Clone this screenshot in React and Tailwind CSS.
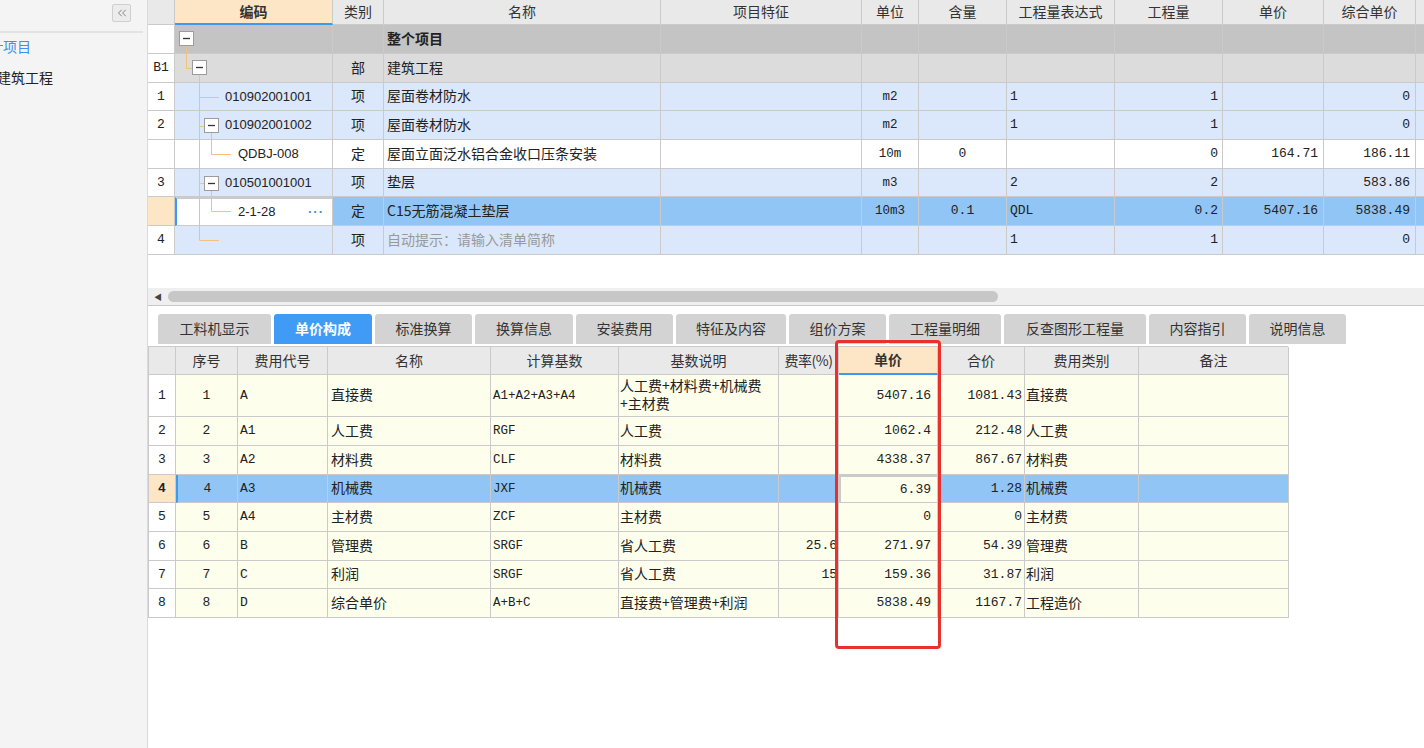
import { ChevronsLeft } from 'lucide-react';

const cjk = "font-['Noto_Sans_CJK_SC',sans-serif]";
const mono = "font-['Liberation_Mono','Noto_Sans_CJK_SC',monospace]";
const sans = "font-['Liberation_Sans','Noto_Sans_CJK_SC',sans-serif]";
// CJK glyphs sit a little low in the line box, lift them
const cn = 'pb-[3px]';

const topCols = ['w-[27px]', 'w-[158px]', 'w-[51px]', 'w-[277px]', 'w-[201px]', 'w-[57px]', 'w-[88px]', 'w-[108px]', 'w-[108px]', 'w-[101px]', 'w-[92px]', 'w-[80px]'];
const topHead = ['', '编码', '类别', '名称', '项目特征', '单位', '含量', '工程量表达式', '工程量', '单价', '综合单价', ''];

const topRows = [
  { h: 'h-[29px]', bg: 'bg-[#c4c4c4]', num: '', code: '', type: '', name: '整个项目', bold: true },
  { h: 'h-[29px]', bg: 'bg-[#dcdcdc]', num: 'B1', code: '', type: '部', name: '建筑工程' },
  { h: 'h-[28px]', bg: 'bg-[#dbe8fb]', num: '1', code: '010902001001', pl: 'pl-[50px]', type: '项', name: '屋面卷材防水', unit: 'm2', expr: '1', qty: '1', total: '0' },
  { h: 'h-[29px]', bg: 'bg-[#dbe8fb]', num: '2', code: '010902001002', pl: 'pl-[50px]', type: '项', name: '屋面卷材防水', unit: 'm2', expr: '1', qty: '1', total: '0' },
  { h: 'h-[29px]', bg: 'bg-white', num: '', code: 'QDBJ-008', pl: 'pl-[63px]', type: '定', name: '屋面立面泛水铝合金收口压条安装', unit: '10m', amt: '0', qty: '0', price: '164.71', total: '186.11' },
  { h: 'h-[28px]', bg: 'bg-[#dbe8fb]', num: '3', code: '010501001001', pl: 'pl-[50px]', type: '项', name: '垫层', unit: 'm3', expr: '2', qty: '2', total: '583.86' },
  { h: 'h-[29px]', bg: 'bg-[#90c5f5]', num: '', code: '2-1-28', pl: 'pl-[61px]', type: '定', name: 'C15无筋混凝土垫层', unit: '10m3', amt: '0.1', expr: 'QDL', qty: '0.2', price: '5407.16', total: '5838.49', editing: true },
  { h: 'h-[29px]', bg: 'bg-[#dbe8fb]', num: '4', code: '', type: '项', name: '自动提示：请输入清单简称', hint: true, expr: '1', qty: '1', total: '0' },
];

const botCols = ['w-[27px]', 'w-[62px]', 'w-[90px]', 'w-[163px]', 'w-[128px]', 'w-[160px]', 'w-[60px]', 'w-[99px]', 'w-[87px]', 'w-[114px]', 'w-[150px]'];
const botHead = ['', '序号', '费用代号', '名称', '计算基数', '基数说明', '费率(%)', '单价', '合价', '费用类别', '备注'];

const botRows = [
  { h: 'h-[42px]', n: '1', code: 'A', name: '直接费', base: 'A1+A2+A3+A4', desc: ['人工费+材料费+机械费', '+主材费'], rate: '', price: '5407.16', sum: '1081.43', cat: '直接费' },
  { h: 'h-[29px]', n: '2', code: 'A1', name: '人工费', base: 'RGF', desc: ['人工费'], rate: '', price: '1062.4', sum: '212.48', cat: '人工费' },
  { h: 'h-[29px]', n: '3', code: 'A2', name: '材料费', base: 'CLF', desc: ['材料费'], rate: '', price: '4338.37', sum: '867.67', cat: '材料费' },
  { h: 'h-[28px]', n: '4', code: 'A3', name: '机械费', base: 'JXF', desc: ['机械费'], rate: '', price: '6.39', sum: '1.28', cat: '机械费', sel: true },
  { h: 'h-[29px]', n: '5', code: 'A4', name: '主材费', base: 'ZCF', desc: ['主材费'], rate: '', price: '0', sum: '0', cat: '主材费' },
  { h: 'h-[29px]', n: '6', code: 'B', name: '管理费', base: 'SRGF', desc: ['省人工费'], rate: '25.6', price: '271.97', sum: '54.39', cat: '管理费' },
  { h: 'h-[28px]', n: '7', code: 'C', name: '利润', base: 'SRGF', desc: ['省人工费'], rate: '15', price: '159.36', sum: '31.87', cat: '利润' },
  { h: 'h-[29px]', n: '8', code: 'D', name: '综合单价', base: 'A+B+C', desc: ['直接费+管理费+利润'], rate: '', price: '5838.49', sum: '1167.7', cat: '工程造价' },
];

const tabs = [
  ['工料机显示', 'w-[113px]'], ['单价构成', 'w-[98px]'], ['标准换算', 'w-[97px]'], ['换算信息', 'w-[98px]'],
  ['安装费用', 'w-[97px]'], ['特征及内容', 'w-[110px]'], ['组价方案', 'w-[97px]'], ['工程量明细', 'w-[112px]'],
  ['反查图形工程量', 'w-[142px]'], ['内容指引', 'w-[97px]'], ['说明信息', 'w-[97px]'],
];

const cell = 'shrink-0 h-full border-r border-b border-[#cacaca] flex items-center overflow-hidden whitespace-nowrap';

function MinusBox({ x, y }) {
  return (
    <g>
      <rect x={x + 0.5} y={y + 0.5} width="14" height="14" fill="#fff" stroke="#9c9c9c" />
      <line x1={x + 4} y1={y + 7.5} x2={x + 11} y2={y + 7.5} stroke="#333" strokeWidth="1.3" />
    </g>
  );
}

function Tree() {
  const c = '#f4c080';
  return (
    <svg className="absolute left-0 top-0 pointer-events-none" width="200" height="260">
      <path d="M38.5 46 V68.5 H44" stroke={c} fill="none" />
      <path d="M51.5 75 V240.5 H71" stroke={c} fill="none" />
      <path d="M51.5 97.5 H71" stroke={c} fill="none" />
      <path d="M51.5 126.5 H56" stroke={c} fill="none" />
      <path d="M63.5 133 V154.5 H83" stroke={c} fill="none" />
      <path d="M51.5 183.5 H56" stroke={c} fill="none" />
      <path d="M63.5 191 V211.5 H83" stroke={c} fill="none" />
      <MinusBox x={31} y={31} />
      <MinusBox x={44} y={60} />
      <MinusBox x={56} y={118} />
      <MinusBox x={56} y={176} />
    </svg>
  );
}

function TopTable() {
  return (
    <div className="relative h-[288px] overflow-hidden">
      <div className="flex h-[25px] bg-[#e9e9e9]">
        {topHead.map((t, i) => (
          <div key={i} className={`${cell} ${topCols[i]} justify-center text-[14px] text-[#333] pb-[2px] ${i === 1 ? 'bg-[#fde6c6] font-bold border-b-2 border-b-[#3c9af0]' : ''}`}>{t}</div>
        ))}
      </div>
      {topRows.map((r, idx) => (
        <div key={idx} className={`flex ${r.h} ${r.bg} text-[14px] text-[#222]`}>
          <div className={`${cell} ${topCols[0]} justify-center ${r.editing ? 'bg-[#fde6c6]' : 'bg-white'} ${mono} text-[13px]`}>{r.num}</div>
          <div className={`${cell} ${topCols[1]} ${r.pl || ''} ${sans} text-[13px] ${r.editing ? 'bg-white border-2 border-[#6e6e6e] border-l-[#3c9af0] justify-between pr-[8px]' : ''}`}>
            <span>{r.code}</span>
            {r.editing && <span className="text-[#3a8fe6] font-bold tracking-[1px] text-[13px]">···</span>}
          </div>
          <div className={`${cell} ${topCols[2]} justify-center ${cn}`}>{r.type}</div>
          <div className={`${cell} ${topCols[3]} pl-[3px] ${cn} ${r.bold ? 'font-bold' : ''} ${r.hint ? 'text-[#999]' : ''}`}>{r.name}</div>
          <div className={`${cell} ${topCols[4]}`}></div>
          <div className={`${cell} ${topCols[5]} justify-center ${mono} text-[12.5px]`}>{r.unit}</div>
          <div className={`${cell} ${topCols[6]} justify-center ${mono} text-[13px]`}>{r.amt}</div>
          <div className={`${cell} ${topCols[7]} pl-[3px] ${mono} text-[13px]`}>{r.expr}</div>
          <div className={`${cell} ${topCols[8]} justify-end pr-[4px] ${mono} text-[13px]`}>{r.qty}</div>
          <div className={`${cell} ${topCols[9]} justify-end pr-[5px] ${mono} text-[13px]`}>{r.price}</div>
          <div className={`${cell} ${topCols[10]} justify-end pr-[5px] ${mono} text-[13px]`}>{r.total}</div>
          <div className={`${cell} ${topCols[11]}`}></div>
        </div>
      ))}
      <Tree />
    </div>
  );
}

function BottomTable() {
  return (
    <div className="border-t border-l border-[#cacaca] w-[1140px]">
      <div className="flex h-[28px] bg-[#e9e9e9]">
        {botHead.map((t, i) => (
          <div key={i} className={`${cell} ${botCols[i]} justify-center text-[14px] text-[#333] pb-[2px] ${i === 7 ? 'bg-[#fde6c6] font-bold border-b-2 border-b-[#3c9af0]' : ''} ${i === 6 ? 'text-[13px] tracking-[-0.5px]' : ''}`}>{t}</div>
        ))}
      </div>
      {botRows.map((r) => (
        <div key={r.n} className={`flex ${r.h} ${r.sel ? 'bg-[#90c5f5]' : 'bg-[#fefeec]'} text-[14px] text-[#222]`}>
          <div className={`${cell} ${botCols[0]} justify-center ${r.sel ? 'bg-[#fde6c6] font-bold' : 'bg-white'} ${mono} text-[13px]`}>{r.n}</div>
          <div className={`${cell} ${botCols[1]} justify-center ${mono} text-[13px] ${r.sel ? 'border-l-2 border-l-[#3c9af0]' : ''}`}>{r.n}</div>
          <div className={`${cell} ${botCols[2]} pl-[2px] ${mono} text-[13px]`}>{r.code}</div>
          <div className={`${cell} ${botCols[3]} pl-[3px] ${cn}`}>{r.name}</div>
          <div className={`${cell} ${botCols[4]} pl-[2px] ${mono} text-[12.5px]`}>{r.base}</div>
          <div className={`${cell} ${botCols[5]} pl-[1px] ${cn}`}>
            <div className="leading-[18px]">
              {r.desc.map((d, i) => <div key={i}>{d}</div>)}
            </div>
          </div>
          <div className={`${cell} ${botCols[6]} justify-end pr-[1px] ${mono} text-[13px]`}>{r.rate}</div>
          <div className={`${cell} ${botCols[7]} justify-end pr-[6px] ${mono} text-[13px] ${r.sel ? 'bg-[#fefeec] border-2 border-[#3c9af0]' : ''}`}>{r.price}</div>
          <div className={`${cell} ${botCols[8]} justify-end pr-[2px] ${mono} text-[13px]`}>{r.sum}</div>
          <div className={`${cell} ${botCols[9]} pl-[1px] ${cn}`}>{r.cat}</div>
          <div className={`${cell} ${botCols[10]}`}></div>
        </div>
      ))}
    </div>
  );
}

export default function App() {
  return (
    <div className={`flex w-[1424px] h-[748px] overflow-hidden bg-white ${cjk} leading-[18px]`}>
      <aside className="w-[148px] shrink-0 bg-[#f4f4f4] border-r border-[#dadada] overflow-hidden">
        <div className="h-[31px] flex justify-end items-start pt-[4px] pr-[16px]">
          <div className="w-[19px] h-[18px] border border-[#cfcfcf] bg-[#ececec] rounded-[2px] flex items-center justify-center text-[#7a7a7a]">
            <ChevronsLeft size={14} strokeWidth={1.6} />
          </div>
        </div>
        <div className="h-[2px] w-[143px] bg-[#e3e3e3]"></div>
        <div className="flex items-center h-[28px] pb-[3px]">
          <div className="w-[3px] h-[1px] bg-[#3d8ff0]"></div>
          <span className="text-[14px] text-[#3d8ff0]">项目</span>
        </div>
        <div className="h-[34px] flex items-center pb-[3px] -ml-[3px] text-[14px] text-[#222]">建筑工程</div>
      </aside>
      <main className="relative flex-1 flex flex-col">
        <TopTable />
        <div className="h-[18px] bg-[#efefef] border-b border-[#c6c6c6] flex items-center">
          <span className="ml-[6px] text-[8px] text-[#444] leading-none">◀</span>
          <div className="ml-[6px] w-[830px] h-[11px] rounded-full bg-[#c7c7c7]"></div>
        </div>
        <div className="h-[8px]"></div>
        <div className="flex h-[30px] pl-[10px] gap-[3px]">
          {tabs.map(([t, w], i) => (
            <div key={t} className={`${w} h-full pb-[2px] rounded-t-[3px] flex items-center justify-center text-[14px] ${i === 1 ? 'bg-[#3f9bf6] text-white font-bold' : 'bg-[#d3d3d3] text-[#333]'}`}>{t}</div>
          ))}
        </div>
        <div className="h-[2px]"></div>
        <BottomTable />
        <div className="absolute left-[687px] top-[340px] w-[106px] h-[309px] border-[3px] border-[#e8302c] rounded-[4px] pointer-events-none"></div>
      </main>
    </div>
  );
}
